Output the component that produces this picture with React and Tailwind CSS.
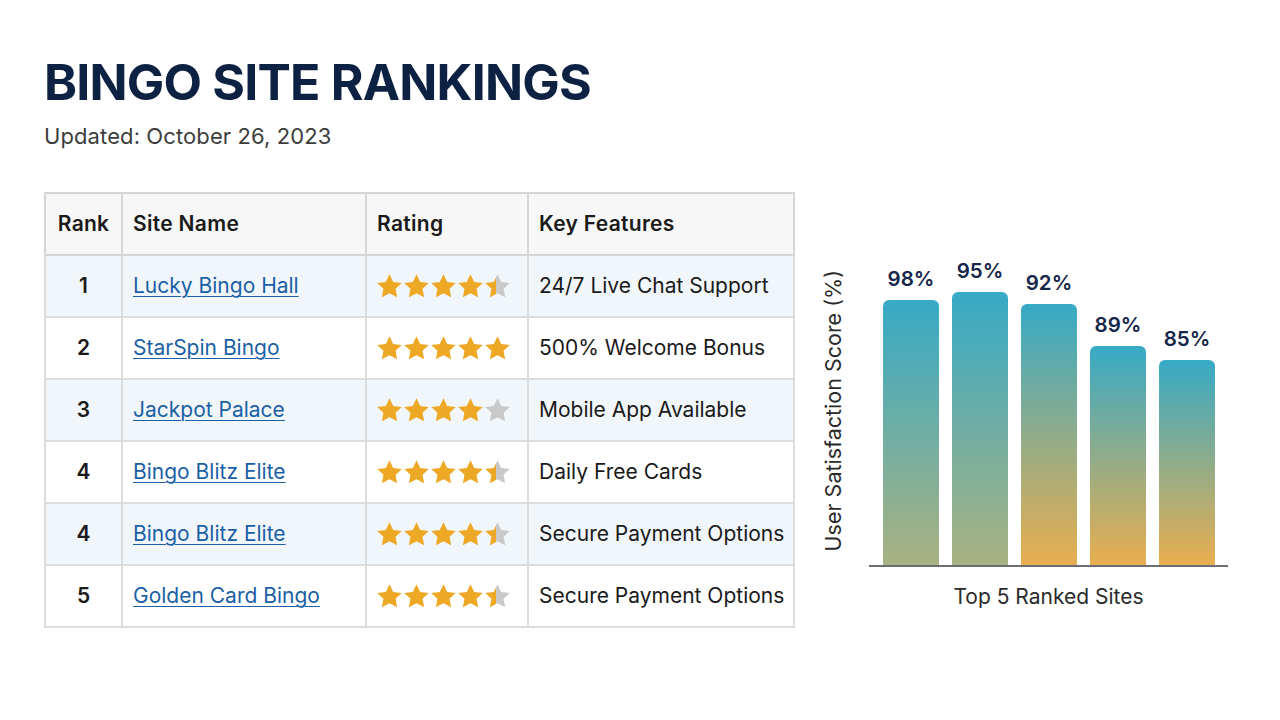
import React from "react";

const ROWS = [
  { rank: 1, name: "Lucky Bingo Hall", rating: 4.5, feature: "24/7 Live Chat Support" },
  { rank: 2, name: "StarSpin Bingo", rating: 5, feature: "500% Welcome Bonus" },
  { rank: 3, name: "Jackpot Palace", rating: 4, feature: "Mobile App Available" },
  { rank: 4, name: "Bingo Blitz Elite", rating: 4.5, feature: "Daily Free Cards" },
  { rank: 4, name: "Bingo Blitz Elite", rating: 4.5, feature: "Secure Payment Options" },
  { rank: 5, name: "Golden Card Bingo", rating: 4.5, feature: "Secure Payment Options" },
];

const BARS = [
  { label: "98%", h: 265, to: "#a9b281" },
  { label: "95%", h: 273, to: "#a9b281" },
  { label: "92%", h: 261, to: "#e9ae4f" },
  { label: "89%", h: 219, to: "#e9ae4f" },
  { label: "85%", h: 205, to: "#e9ae4f" },
];

const STAR =
  "M12 1l3.3 6.9 7.6 1-5.5 5.2 1.4 7.5L12 17.9l-6.8 3.7 1.4-7.5L1.1 8.9l7.6-1z";

function Star({ fill, id }) {
  return (
    <svg width="27" height="27" viewBox="0 0 24 24" className="shrink-0">
      <defs>
        <linearGradient id={id} x1="0" x2="1" y1="0" y2="0">
          <stop offset={fill} stopColor="#eda826" />
          <stop offset={fill} stopColor="#c9c9c9" />
        </linearGradient>
      </defs>
      <path d={STAR} fill={`url(#${id})`} />
    </svg>
  );
}

function Stars({ rating, row }) {
  return (
    <div className="flex items-center gap-0">
      {[0, 1, 2, 3, 4].map((i) => {
        const f = Math.max(0, Math.min(1, rating - i));
        return <Star key={i} id={`st-${row}-${i}`} fill={f === 0.5 ? 0.45 : f} />;
      })}
    </div>
  );
}

export default function App() {
  return (
    <div
      className="min-h-screen w-[1280px] h-[720px] bg-white px-[44px] pt-[52px]"
      style={{ fontFamily: "Inter, 'Noto Sans', sans-serif" }}
    >
      <h1 className="text-[50px] leading-[60px] font-bold tracking-[-0.8px] text-[#0d2242]">
        BINGO SITE RANKINGS
      </h1>
      <p className="mt-[10px] text-[22px] leading-[28px] tracking-[0.1px] text-[#3d3d3d]">
        Updated: October 26, 2023
      </p>

      <div className="mt-[42px] flex items-start">
        <table className="w-[751px] border-collapse border border-[#d6d6d6] text-[21px] text-[#1a1a1a]">
          <thead>
            <tr className="h-[62px] bg-[#f7f7f7]">
              <th className="w-[77px] border-2 border-[#d6d6d6] text-center font-semibold tracking-[0.2px]">Rank</th>
              <th className="w-[244px] border-2 border-[#d6d6d6] pl-[10px] text-left font-semibold tracking-[0.3px]">Site Name</th>
              <th className="w-[162px] border-2 border-[#d6d6d6] pl-[10px] text-left font-semibold tracking-[0.3px]">Rating</th>
              <th className="border-2 border-[#d6d6d6] pl-[10px] text-left font-semibold tracking-[0.3px]">Key Features</th>
            </tr>
          </thead>
          <tbody>
            {ROWS.map((r, i) => (
              <tr key={i} className={`h-[62px] ${i % 2 === 0 ? "bg-[#f1f6fa]" : "bg-white"}`}>
                <td className="border-2 border-[#dcdcdc] text-center font-semibold">{r.rank}</td>
                <td className="border-2 border-[#dcdcdc] pl-[10px]">
                  <a href="#" className="text-[#1b5fa6] underline underline-offset-[3px] decoration-1">
                    {r.name}
                  </a>
                </td>
                <td className="border-2 border-[#dcdcdc] pl-[9px]">
                  <Stars rating={r.rating} row={i} />
                </td>
                <td className="border-2 border-[#dcdcdc] pl-[10px]">{r.feature}</td>
              </tr>
            ))}
          </tbody>
        </table>

        <div className="ml-[22px] mt-[62px] flex flex-col">
          <div className="flex items-end">
            <div className="flex h-[313px] w-[52px] items-center justify-start pl-0">
              <span className="rotate-180 text-[21.5px] whitespace-nowrap text-[#2a2a2a] [writing-mode:vertical-rl]">
                User Satisfaction Score (%)
              </span>
            </div>
            <div className="flex w-[359px] items-end gap-[13px] border-b-2 border-[#6b6f74] px-[14px]">
              {BARS.map((b) => (
                <div key={b.label} className="flex w-[56px] flex-col items-center">
                  <span className="mb-[5px] text-[20.5px] font-semibold text-[#15264a]">{b.label}</span>
                  <div
                    className="w-[56px] rounded-t-[6px]"
                    style={{
                      height: b.h,
                      background: `linear-gradient(to bottom, #36aac6, ${b.to})`,
                    }}
                  />
                </div>
              ))}
            </div>
          </div>
          <div className="ml-[52px] mt-[14px] w-[359px] text-center text-[21px] text-[#2a2a2a]">
            Top 5 Ranked Sites
          </div>
        </div>
      </div>
    </div>
  );
}
